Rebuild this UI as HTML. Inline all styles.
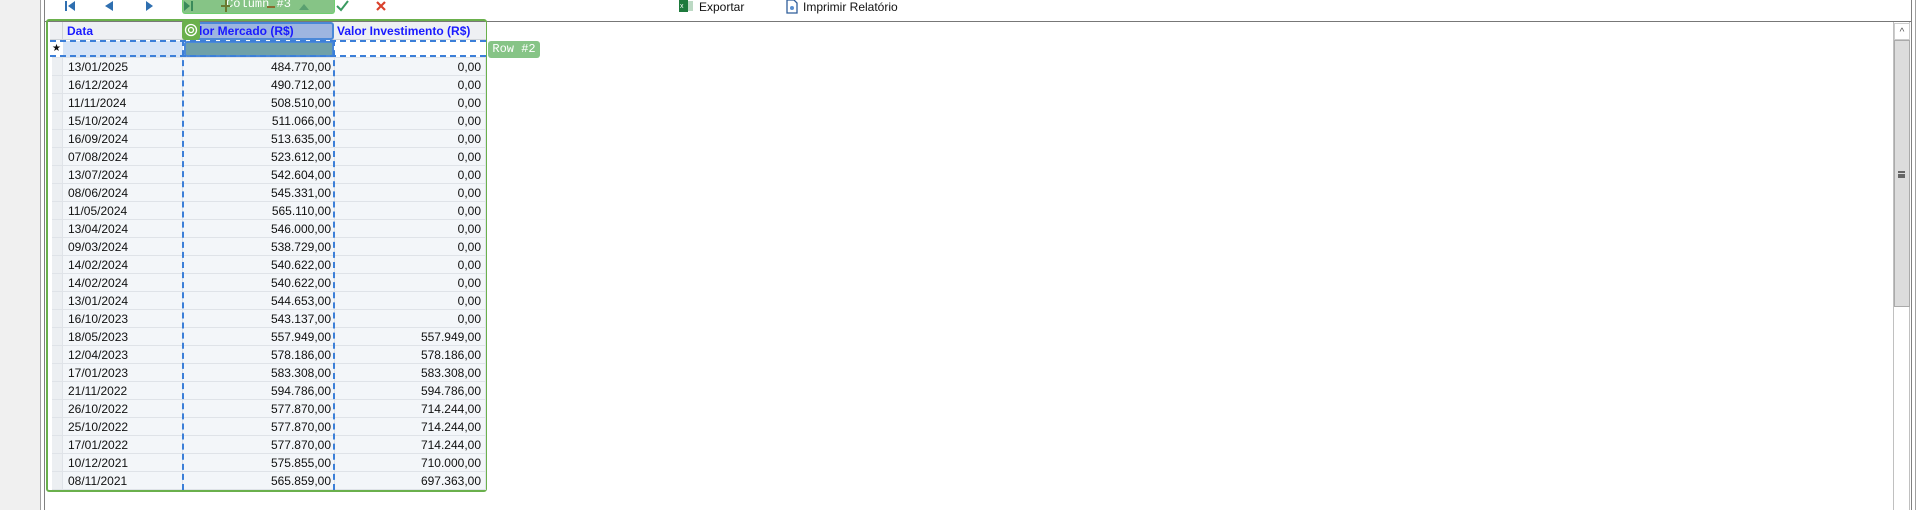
<!DOCTYPE html>
<html><head><meta charset="utf-8"><style>
*{margin:0;padding:0;box-sizing:border-box}
body{width:1920px;height:510px;background:#fff;position:relative;overflow:hidden;font-family:"Segoe UI","Liberation Sans",sans-serif;font-size:12px;color:#111}
.a{position:absolute}
.row{position:absolute;left:52px;width:434px;height:18px;border-bottom:1px solid #dfe3e8;background:#f3f6f9}
.row div{position:absolute;top:0;height:17px;line-height:18px;border-right:1px solid #dfe3e8}
.c0{left:0;width:11px;background:#eceff2}
.c1{left:11px;width:120px;padding-left:5px}
.c2{left:131px;width:152px;text-align:right;padding-right:3px}
.c3{left:283px;width:151px;text-align:right;padding-right:4px}
</style></head><body>
<div class="a" style="left:0;top:0;width:40px;height:510px;background:#f0f0f0"></div>
<div class="a" style="left:40px;top:0;width:1px;height:510px;background:#a0a0a0"></div>
<div class="a" style="left:44px;top:0;width:1px;height:510px;background:#808080"></div>
<div class="a" style="left:1911px;top:0;width:1px;height:510px;background:#808080"></div>
<div class="a" style="left:1915px;top:0;width:1px;height:510px;background:#a0a0a0"></div>
<div class="a" style="left:45px;top:21px;width:1866px;height:1px;background:#777"></div>
<svg class="a" style="left:60px;top:0" width="150" height="14">
<rect x="5" y="1" width="2" height="10" fill="#2f6fb0"/><path d="M15 1 L8 6 L15 11Z" fill="#2f6fb0"/>
<path d="M53 1 L45 6 L53 11Z" fill="#2f6fb0"/>
<path d="M86 1 L93 6 L86 11Z" fill="#2f6fb0"/>
</svg>
<div class="a" style="left:182px;top:0;width:153px;height:14px;background:#86c486;border:1px solid #6fcf6f;border-top:none;border-radius:0 0 3px 3px;color:#fff;font-family:'Liberation Mono',monospace;font-size:12px;line-height:8px;text-align:center;overflow:hidden">Column #3</div>
<svg class="a" style="left:182px;top:0" width="150" height="14">
<path d="M2 1 L8 6 L2 11Z" fill="#3a8a5a"/><rect x="9" y="1" width="2" height="10" fill="#3a8a5a"/>
<rect x="39" y="5" width="9" height="2" fill="#6a7a30"/><rect x="43" y="0" width="2" height="12" fill="#6a7a30"/>
<rect x="85" y="6" width="8" height="2" fill="#8a6a30"/>
<path d="M117 10 L122 4 L127 10Z" fill="#5aa070"/>
</svg>
<svg class="a" style="left:336px;top:0" width="60" height="14">
<path d="M1 6 L5 10 L12 1" stroke="#3a9a60" stroke-width="2" fill="none"/>
<path d="M41 2 L49 10 M49 2 L41 10" stroke="#d9402b" stroke-width="2.2"/>
</svg>
<svg class="a" style="left:679px;top:0" width="14" height="13"><rect x="0" y="0" width="9" height="12" fill="#1e7a3c"/><rect x="9" y="1" width="5" height="10" fill="#bcd9c4"/><text x="1" y="8" font-size="7" fill="#fff" font-family="Liberation Sans">x</text></svg>
<div class="a" style="left:699px;top:0;font-size:12px;line-height:14px">Exportar</div>
<svg class="a" style="left:786px;top:0" width="12" height="14"><path d="M1 0 H8 L11 3 V13 H1Z" fill="#fff" stroke="#2f5d9a" stroke-width="1.3"/><circle cx="6" cy="8" r="2" fill="#5a8fd0"/></svg>
<div class="a" style="left:803px;top:0;font-size:12px;line-height:14px">Imprimir Relatório</div>
<div class="a" style="left:46px;top:19px;width:441px;height:473px;border:2px solid #6ab04c;border-radius:3px"></div>
<div class="a" style="left:50px;top:22px;width:436px;height:18px;background:#eef0f3;border-bottom:1px solid #d0d4d8"></div>
<div class="a" style="left:52px;top:22px;width:11px;height:18px;border-right:1px solid #d0d4d8"></div>
<div class="a" style="left:67px;top:22px;line-height:19px;color:#1a1aff;font-weight:bold">Data</div>
<div class="a" style="left:183px;top:22px;width:151px;height:18px;background:#9db5e0;border:2px solid #4a88d8;border-radius:3px;color:#1a1aff;font-weight:bold;line-height:15px;padding-left:14px;overflow:hidden">lor Mercado (R$)</div>
<div class="a" style="left:337px;top:22px;line-height:19px;color:#1a1aff;font-weight:bold">Valor Investimento (R$)</div>
<div class="a" style="left:182px;top:20px;width:18px;height:20px;background:#6ab04c;border-radius:3px"></div>
<svg class="a" style="left:182px;top:22px" width="18" height="18"><circle cx="9" cy="8" r="5.5" fill="none" stroke="#fff" stroke-width="1.3"/><circle cx="9" cy="8" r="2.5" fill="none" stroke="#fff" stroke-width="1.3"/></svg>
<div class="a" style="left:52px;top:40px;width:434px;height:18px;background:#fff;border-bottom:1px solid #dfe3e8"></div>
<div class="a" style="left:63px;top:41px;width:120px;height:16px;background:#d6e4f7"></div>
<div class="a" style="left:52px;top:40px;font-size:10px;line-height:18px">★</div>
<div class="a" style="left:184px;top:41px;width:150px;height:16px;background:#6fa0a8;border:2px solid #4a88d8;border-radius:3px"></div>
<div class="a" style="left:50px;top:40px;width:436px;height:17px;border-top:2px dashed #3c7fd8;border-bottom:2px dashed #3c7fd8"></div>
<div class="a" style="left:488px;top:41px;width:52px;height:17px;background:#86c486;border-radius:3px;color:#fff;font-family:'Liberation Mono',monospace;font-size:12px;line-height:17px;text-align:center">Row #2</div>
<div id="rows"></div>
<div class="a" style="left:182px;top:40px;width:0;height:450px;border-left:2px dashed #3c7fd8"></div>
<div class="a" style="left:333px;top:40px;width:0;height:450px;border-left:2px dashed #3c7fd8"></div>
<div class="a" style="left:1893px;top:22px;width:17px;height:488px;border-left:1px solid #c0c0c0;border-right:1px solid #c0c0c0"></div>
<div class="a" style="left:1894px;top:23px;width:16px;height:17px;background:#fff;border:1px solid #ccc;text-align:center;font-size:10px;color:#555;line-height:17px">^</div>
<div class="a" style="left:1894px;top:40px;width:16px;height:267px;background:#dcdcdc;border:1px solid #aaa"></div>
<div class="a" style="left:1898px;top:171px;width:7px;height:7px;border-top:2px solid #666;border-bottom:2px solid #666"></div>
<div class="a" style="left:1898px;top:174px;width:7px;height:2px;background:#666"></div>
<script>
var d=[["13/01/2025","484.770,00","0,00"],["16/12/2024","490.712,00","0,00"],["11/11/2024","508.510,00","0,00"],["15/10/2024","511.066,00","0,00"],["16/09/2024","513.635,00","0,00"],["07/08/2024","523.612,00","0,00"],["13/07/2024","542.604,00","0,00"],["08/06/2024","545.331,00","0,00"],["11/05/2024","565.110,00","0,00"],["13/04/2024","546.000,00","0,00"],["09/03/2024","538.729,00","0,00"],["14/02/2024","540.622,00","0,00"],["14/02/2024","540.622,00","0,00"],["13/01/2024","544.653,00","0,00"],["16/10/2023","543.137,00","0,00"],["18/05/2023","557.949,00","557.949,00"],["12/04/2023","578.186,00","578.186,00"],["17/01/2023","583.308,00","583.308,00"],["21/11/2022","594.786,00","594.786,00"],["26/10/2022","577.870,00","714.244,00"],["25/10/2022","577.870,00","714.244,00"],["17/01/2022","577.870,00","714.244,00"],["10/12/2021","575.855,00","710.000,00"],["08/11/2021","565.859,00","697.363,00"]];
var h="";d.forEach(function(r,i){h+='<div class="row" style="top:'+(58+i*18)+'px"><div class="c0"></div><div class="c1">'+r[0]+'</div><div class="c2">'+r[1]+'</div><div class="c3">'+r[2]+'</div></div>';});
document.getElementById("rows").outerHTML=h;
</script>
</body></html>
